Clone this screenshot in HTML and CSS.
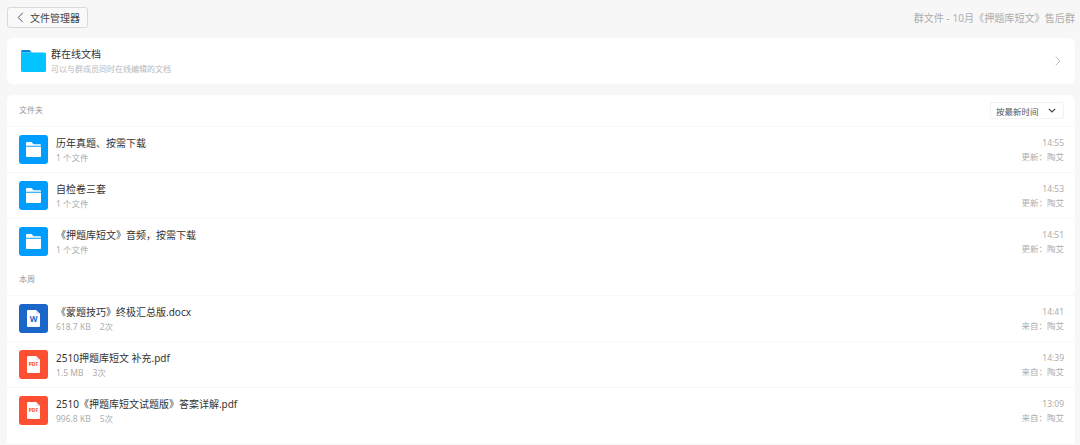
FILE: index.html
```html
<!DOCTYPE html>
<html lang="zh-CN">
<head>
    <meta charset="UTF-8">
    <title>群文件</title>
    <link rel="stylesheet" href="styles.css">
</head>
<body>
    <svg class="defs" width="0" height="0">
        <symbol id="folder-tile" viewBox="0 0 29 29">
            <rect width="29" height="29" rx="3" fill="#009dff"/>
            <path d="M7 8a1 1 0 0 1 1-1h4.600l2 2.300H21a1 1 0 0 1 1 1v.5H7z" fill="#fff"/>
            <path d="M7 11.700h15V21a1 1 0 0 1-1 1H8a1 1 0 0 1-1-1z" fill="#fff"/>
        </symbol>
        <symbol id="doc-sheet" viewBox="0 0 29 29">
            <path d="M8 7a1 1 0 0 1 1-1h8l4 4v12a1 1 0 0 1-1 1H9a1 1 0 0 1-1-1z" fill="#fff"/>
            <path d="M17 6l4 4h-3a1 1 0 0 1-1-1z" fill="#dfe6f0"/>
        </symbol>
    </svg>

    <header class="topbar">
        <button class="back-btn">
            <svg width="7" height="11" viewBox="0 0 7 11"><path d="M5.800 .8L1.200 5.500l4.600 4.700" fill="none" stroke="#555" stroke-width="1"/></svg>
            文件管理器
        </button>
        <span class="group-title">群文件 - 10月《押题库短文》售后群</span>
    </header>

    <section class="card online-docs">
        <svg class="big-folder" width="25" height="22" viewBox="0 0 25 22">
            <path d="M0 1.500A1.500 1.500 0 0 1 1.500 0h7l2.500 2.500H0z" fill="#0a84e0"/>
            <path d="M0 2.500h23.500A1.500 1.500 0 0 1 25 4v16.500a1.500 1.500 0 0 1-1.500 1.500h-22A1.500 1.500 0 0 1 0 20.500z" fill="#00c3ff"/>
        </svg>
        <div class="online-text">
            <div class="online-name">群在线文档</div>
            <div class="online-desc">可以与群成员同时在线编辑的文档</div>
        </div>
        <svg class="chevron" width="6" height="10" viewBox="0 0 6 10"><path d="M.7 .7L5 5 .7 9.300" fill="none" stroke="#bdbdbd" stroke-width="1"/></svg>
    </section>

    <section class="card files">
        <div class="files-head">
            <span class="group-label">文件夹</span>
            <button class="sort-btn">
                按最新时间
                <svg width="8" height="5" viewBox="0 0 8 5"><path d="M.8 .8L4 4l3.200-3.200" fill="none" stroke="#444" stroke-width="1.200"/></svg>
            </button>
        </div>

        <div class="row">
            <svg class="tile" width="29" height="29"><use href="#folder-tile"/></svg>
            <div class="info">
                <div class="name">历年真题、按需下载</div>
                <div class="meta">1 个文件</div>
            </div>
            <div class="side"><div>14:55</div><div>更新：陶艾</div></div>
        </div>
        <div class="row">
            <svg class="tile" width="29" height="29"><use href="#folder-tile"/></svg>
            <div class="info">
                <div class="name">自检卷三套</div>
                <div class="meta">1 个文件</div>
            </div>
            <div class="side"><div>14:53</div><div>更新：陶艾</div></div>
        </div>
        <div class="row row-last">
            <svg class="tile" width="29" height="29"><use href="#folder-tile"/></svg>
            <div class="info">
                <div class="name">《押题库短文》音频，按需下载</div>
                <div class="meta">1 个文件</div>
            </div>
            <div class="side"><div>14:51</div><div>更新：陶艾</div></div>
        </div>

        <div class="week-head"><span class="group-label">本周</span></div>

        <div class="row">
            <div class="file-tile word">
                <svg width="29" height="29"><use href="#doc-sheet"/></svg>
                <span class="file-mark word-mark">W</span>
            </div>
            <div class="info">
                <div class="name">《蒙题技巧》终极汇总版.docx</div>
                <div class="meta"><span>618.7 KB</span><span>2次</span></div>
            </div>
            <div class="side"><div>14:41</div><div>来自：陶艾</div></div>
        </div>
        <div class="row">
            <div class="file-tile pdf">
                <svg width="29" height="29"><use href="#doc-sheet"/></svg>
                <span class="file-mark pdf-mark">PDF</span>
            </div>
            <div class="info">
                <div class="name">2510押题库短文 补充.pdf</div>
                <div class="meta"><span>1.5 MB</span><span>3次</span></div>
            </div>
            <div class="side"><div>14:39</div><div>来自：陶艾</div></div>
        </div>
        <div class="row row-tall">
            <div class="file-tile pdf">
                <svg width="29" height="29"><use href="#doc-sheet"/></svg>
                <span class="file-mark pdf-mark">PDF</span>
            </div>
            <div class="info">
                <div class="name">2510《押题库短文试题版》答案详解.pdf</div>
                <div class="meta"><span>996.8 KB</span><span>5次</span></div>
            </div>
            <div class="side"><div>13:09</div><div>来自：陶艾</div></div>
        </div>
    </section>
</body>
</html>
```

FILE: styles.css
```css
body {
    font-family: "Noto Sans", "Noto Sans CJK SC", sans-serif;
    margin: 0;
    padding: 0 5px 0 7px;
    height: 445px;
    overflow: hidden;
    background-color: #f7f7f7;
    color: #333;
}
.defs {
    position: absolute;
}
.topbar {
    display: flex;
    align-items: center;
    justify-content: space-between;
    height: 38px;
    padding-bottom: 3px;
    box-sizing: border-box;
}
.back-btn {
    display: flex;
    align-items: center;
    gap: 6px;
    width: 81px;
    height: 21px;
    padding: 0 0 0 9px;
    background: #f9f9f9;
    border: 1px solid #d9d9d9;
    border-radius: 3px;
    font: inherit;
    font-size: 10px;
    color: #444;
}
.group-title {
    font-size: 10.100px;
    color: #adadad;
}
.card {
    background: #fff;
    border-radius: 6px;
}
.online-docs {
    display: flex;
    align-items: center;
    height: 46px;
    padding: 0 14px;
    box-sizing: border-box;
    margin-bottom: 11px;
}
.online-text {
    flex: 1;
    margin-left: 5px;
}
.online-name {
    font-size: 10px;
    line-height: 14px;
    color: #333;
}
.online-desc {
    font-size: 8px;
    line-height: 12px;
    margin-top: 2px;
    color: #b8b8b8;
}
.files {
    height: 360px;
}
.files-head {
    display: flex;
    align-items: center;
    justify-content: space-between;
    height: 32px;
    padding: 0 11px 0 12px;
    box-sizing: border-box;
    border-bottom: 1px solid #f7f7f7;
}
.group-label {
    font-size: 8px;
    color: #999;
}
.files-head .group-label {
    margin-bottom: 2px;
}
.sort-btn {
    display: flex;
    align-items: center;
    justify-content: space-between;
    width: 74px;
    height: 17px;
    padding: 0 7px 0 5px;
    background: #fff;
    border: 1px solid #f2f2f2;
    border-radius: 2px;
    font: inherit;
    font-size: 8.500px;
    color: #555;
}
.row {
    display: flex;
    align-items: center;
    height: 46px;
    padding: 0 11px 0 12px;
    box-sizing: border-box;
    border-bottom: 1px solid #f7f7f7;
}
.row-last {
    border-bottom-color: transparent;
}
.row-tall {
    height: 57px;
    padding-bottom: 11px;
}
.week-head {
    display: flex;
    align-items: center;
    height: 31px;
    padding: 0 0 3px 12px;
    box-sizing: border-box;
    border-bottom: 1px solid #f7f7f7;
}
.tile {
    flex: none;
}
.file-tile {
    position: relative;
    flex: none;
    width: 29px;
    height: 29px;
    border-radius: 3px;
}
.file-tile svg {
    display: block;
}
.word {
    background: #1a66c9;
}
.pdf {
    background: #ff4f33;
}
.file-mark {
    position: absolute;
    left: 0;
    right: 0;
    text-align: center;
    font-weight: bold;
}
.word-mark {
    top: 10px;
    font-size: 8px;
    line-height: 10px;
    color: #1a66c9;
}
.pdf-mark {
    top: 11px;
    font-size: 5px;
    line-height: 7px;
    color: #ff4f33;
}
.info {
    flex: 1;
    margin-left: 8px;
}
.name {
    font-size: 10px;
    line-height: 14px;
    color: #333;
}
.meta {
    display: flex;
    gap: 9px;
    font-size: 8.500px;
    line-height: 12px;
    margin-top: 2px;
    color: #adadad;
}
.side {
    text-align: right;
    font-size: 8.500px;
    line-height: 14px;
    color: #adadad;
}
```
